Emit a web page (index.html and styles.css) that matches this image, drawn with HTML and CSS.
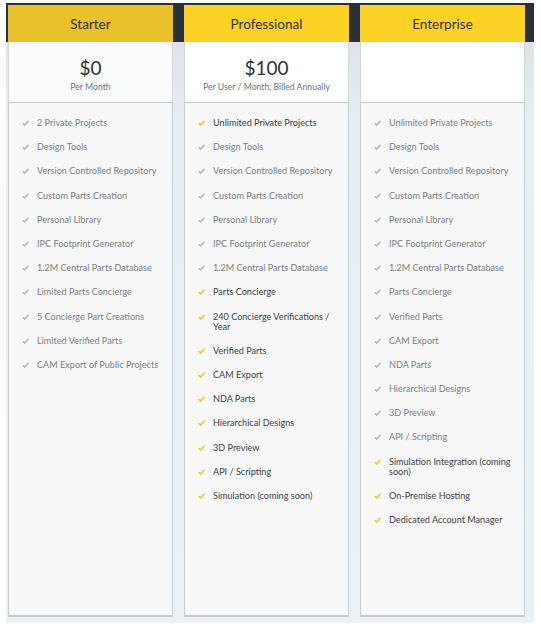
FILE: index.html
```html
<!DOCTYPE html>
<html>
<head>
<meta charset="utf-8">
<link rel="stylesheet" href="styles.css">
</head>
<body>
<div class="pricing">
  <div class="plan plan-muted">
    <div class="plan-head">Starter</div>
    <div class="plan-price">
      <div class="amount">$0</div>
      <div class="period">Per Month</div>
    </div>
    <ul class="features">
      <li><span class="chk"></span><span>2 Private Projects</span></li>
      <li><span class="chk"></span><span>Design Tools</span></li>
      <li><span class="chk"></span><span>Version Controlled Repository</span></li>
      <li><span class="chk"></span><span>Custom Parts Creation</span></li>
      <li><span class="chk"></span><span>Personal Library</span></li>
      <li><span class="chk"></span><span>IPC Footprint Generator</span></li>
      <li><span class="chk"></span><span>1.2M Central Parts Database</span></li>
      <li><span class="chk"></span><span>Limited Parts Concierge</span></li>
      <li><span class="chk"></span><span>5 Concierge Part Creations</span></li>
      <li><span class="chk"></span><span>Limited Verified Parts</span></li>
      <li><span class="chk"></span><span>CAM Export of Public Projects</span></li>
    </ul>
  </div>
  <div class="plan">
    <div class="plan-head">Professional</div>
    <div class="plan-price">
      <div class="amount">$100</div>
      <div class="period">Per User / Month, Billed Annually</div>
    </div>
    <ul class="features">
      <li class="hl"><span class="chk"></span><span>Unlimited Private Projects</span></li>
      <li><span class="chk"></span><span>Design Tools</span></li>
      <li><span class="chk"></span><span>Version Controlled Repository</span></li>
      <li><span class="chk"></span><span>Custom Parts Creation</span></li>
      <li><span class="chk"></span><span>Personal Library</span></li>
      <li><span class="chk"></span><span>IPC Footprint Generator</span></li>
      <li><span class="chk"></span><span>1.2M Central Parts Database</span></li>
      <li class="hl"><span class="chk"></span><span>Parts Concierge</span></li>
      <li class="hl"><span class="chk"></span><span>240 Concierge Verifications / Year</span></li>
      <li class="hl"><span class="chk"></span><span>Verified Parts</span></li>
      <li class="hl"><span class="chk"></span><span>CAM Export</span></li>
      <li class="hl"><span class="chk"></span><span>NDA Parts</span></li>
      <li class="hl"><span class="chk"></span><span>Hierarchical Designs</span></li>
      <li class="hl"><span class="chk"></span><span>3D Preview</span></li>
      <li class="hl"><span class="chk"></span><span>API / Scripting</span></li>
      <li class="hl"><span class="chk"></span><span>Simulation (coming soon)</span></li>
    </ul>
  </div>
  <div class="plan">
    <div class="plan-head">Enterprise</div>
    <div class="plan-price"></div>
    <ul class="features">
      <li><span class="chk"></span><span>Unlimited Private Projects</span></li>
      <li><span class="chk"></span><span>Design Tools</span></li>
      <li><span class="chk"></span><span>Version Controlled Repository</span></li>
      <li><span class="chk"></span><span>Custom Parts Creation</span></li>
      <li><span class="chk"></span><span>Personal Library</span></li>
      <li><span class="chk"></span><span>IPC Footprint Generator</span></li>
      <li><span class="chk"></span><span>1.2M Central Parts Database</span></li>
      <li><span class="chk"></span><span>Parts Concierge</span></li>
      <li><span class="chk"></span><span>Verified Parts</span></li>
      <li><span class="chk"></span><span>CAM Export</span></li>
      <li><span class="chk"></span><span>NDA Parts</span></li>
      <li><span class="chk"></span><span>Hierarchical Designs</span></li>
      <li><span class="chk"></span><span>3D Preview</span></li>
      <li><span class="chk"></span><span>API / Scripting</span></li>
      <li class="hl"><span class="chk"></span><span>Simulation Integration (coming soon)</span></li>
      <li class="hl"><span class="chk"></span><span>On-Premise Hosting</span></li>
      <li class="hl"><span class="chk"></span><span>Dedicated Account Manager</span></li>
    </ul>
  </div>
</div>
</body>
</html>
```
FILE: styles.css
```css
html, body {
  margin: 0;
  padding: 0;
  background: #ffffff;
  font-family: Lato, "Open Sans", sans-serif;
}

.pricing {
  box-sizing: border-box;
  width: 528px;
  height: 620px;
  margin: 3px 0 0 6px;
  padding: 2px 9px 6px 2px;
  display: flex;
  gap: 11px;
  background: linear-gradient(#27323c 0, #27323c 39px, #dfe3e6 39px, #eaeef0 120px, #eef1f3 100%);
}

.plan {
  width: 165px;
  display: flex;
  flex-direction: column;
}

.plan-head {
  height: 37px;
  background: #fdd226;
  color: #2e3338;
  font-size: 13.5px;
  display: flex;
  align-items: center;
  justify-content: center;
}

.plan-muted .plan-head {
  background: #e8c12b;
}

.plan-price {
  box-sizing: border-box;
  height: 61px;
  background: #ffffff;
  border-left: 1px solid #d3d7da;
  border-right: 1px solid #d3d7da;
  border-bottom: 1px solid #c3c8cc;
  display: flex;
  flex-direction: column;
  align-items: center;
  padding-top: 15px;
}

.plan-muted .plan-price {
  background: #fafbfb;
}

.amount {
  font-size: 19px;
  line-height: 22px;
  color: #2e3338;
}

.period {
  font-size: 8.7px;
  line-height: 12px;
  color: #6d7379;
  margin-top: 2px;
}

.features {
  flex: 1;
  margin: 0;
  list-style: none;
  background: #f8f8f8;
  border: 1px solid #cacdd0;
  border-top: none;
  border-bottom: 2px solid #c6cacd;
  padding: 15px 6px 0 13px;
  display: flex;
  flex-direction: column;
  gap: 14.1px;
}

.features li {
  display: flex;
  align-items: flex-start;
  gap: 8px;
  font-size: 9.1px;
  line-height: 10.1px;
  color: #7a8086;
}

.chk {
  flex: none;
  width: 7px;
  height: 6px;
  margin-top: 2px;
  background: no-repeat center / 7px 6px url("data:image/svg+xml,%3Csvg xmlns='http://www.w3.org/2000/svg' viewBox='0 0 7 6'%3E%3Cpolyline points='0.7,3.2 2.6,5 6.4,0.8' fill='none' stroke='%23b0b5b9' stroke-width='1.5'/%3E%3C/svg%3E");
}

.features li.hl {
  color: #3a4046;
}

.features li.hl .chk {
  background-image: url("data:image/svg+xml,%3Csvg xmlns='http://www.w3.org/2000/svg' viewBox='0 0 7 6'%3E%3Cpolyline points='0.7,3.2 2.6,5 6.4,0.8' fill='none' stroke='%23f7c51c' stroke-width='1.6'/%3E%3C/svg%3E");
}
```
